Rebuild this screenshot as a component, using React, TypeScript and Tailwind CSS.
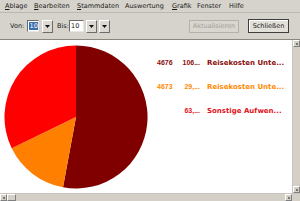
const menu = [
  { label: 'Ablage', u: true, w: 'w-[29px]' },
  { label: 'Bearbeiten', u: true, w: 'w-[43px]' },
  { label: 'Stammdaten', u: true, w: 'w-[48px]' },
  { label: 'Auswertung', u: false, w: 'w-[47px]' },
  { label: 'Grafik', u: true, w: 'w-[25px]' },
  { label: 'Fenster', u: false, w: 'w-[32px]' },
  { label: 'Hilfe', u: false, w: 'w-[30px]' },
];

const legend = [
  { nr: '4676', val: '106...', text: 'Reisekosten Unte...', color: 'text-[#8b0d0d]' },
  { nr: '4673', val: '29,...', text: 'Reisekosten Unte...', color: 'text-[#ff8a00]' },
  { nr: '', val: '63,...', text: 'Sonstige Aufwen...', color: 'text-[#e0101a]' },
];

function DropButton({ className = '' }: { className?: string }) {
  return (
    <div className={`w-[11px] h-[13px] flex items-center justify-center bg-[#dcd9d2] border border-t-white border-l-white border-r-[#6b6b6b] border-b-[#6b6b6b] ${className}`}>
      <svg width="5" height="3" viewBox="0 0 5 3">
        <path d="M0 0 H5 L2.5 3 Z" fill="#111" />
      </svg>
    </div>
  );
}

function ScrollBox() {
  return (
    <div className="w-[7px] h-[7px] shrink-0 bg-[#d4d0c8] border border-t-white border-l-white border-r-[#808080] border-b-[#808080] flex items-center justify-center">
      <div className="w-[2px] h-[2px] bg-[#777]" />
    </div>
  );
}

export default function App() {
  return (
    <div className="w-[300px] h-[201px] bg-[#d6d3cc] grid grid-rows-[13px_27px_153px_8px] font-['DejaVu_Sans',sans-serif] text-[#1a1a1a]">
      {/* menu */}
      <div className="flex items-center pl-[5px] text-[6.5px] leading-none border-b border-[#bdb9b1]">
        {menu.map((m) => (
          <div key={m.label} className={m.w}>
            {m.u ? (
              <>
                <span className="underline underline-offset-1">{m.label[0]}</span>
                {m.label.slice(1)}
              </>
            ) : (
              m.label
            )}
          </div>
        ))}
      </div>

      {/* toolbar */}
      <div className="flex items-center pl-[10px] pr-[11px] text-[6.5px] leading-none border-b border-[#8a8780]">
        <span className="w-[17px]">Von:</span>
        <div className="w-[12px] h-[12px] bg-white border border-t-[#6b6b6b] border-l-[#6b6b6b] border-r-[#e6e6e6] border-b-[#e6e6e6] flex items-center pl-[1px]">
          <span className="bg-[#3b6fb0] text-white leading-[8px] px-[0.5px]">10</span>
        </div>
        <DropButton className="ml-[3px]" />
        <span className="ml-[4px] w-[12px]">Bis:</span>
        <div className="w-[15px] h-[12px] bg-white border border-t-[#6b6b6b] border-l-[#6b6b6b] border-r-[#e6e6e6] border-b-[#e6e6e6] flex items-center pl-[1px]">
          10
        </div>
        <DropButton className="ml-[2px]" />
        <DropButton className="ml-[2px]" />
        <div className="flex-1" />
        <div className="w-[50px] h-[13px] flex items-center justify-center border border-[#b5b2ab] bg-[#d9d6d0] text-[#a09d97]">
          Aktualisieren
        </div>
        <div className="ml-[9px] w-[41px] h-[14px] flex items-center justify-center border border-[#3d3d3d] bg-[#e2dfd9] shadow-[inset_1px_1px_0_#fff]">
          Schließen
        </div>
      </div>

      {/* content */}
      <div className="flex overflow-hidden">
        <div className="flex-1 bg-white flex">
          <svg width="152" height="153" viewBox="0 0 152 153" className="shrink-0 block">
            <path d="M76 77 L76 5.5 A71.5 71.5 0 1 1 63 147.3 Z" fill="#800000" />
            <path d="M76 77 L63 147.3 A71.5 71.5 0 0 1 11.7 108.3 Z" fill="#ff8000" />
            <path d="M76 77 L11.7 108.3 A71.5 71.5 0 0 1 76 5.5 Z" fill="#ff0000" />
          </svg>
          <div className="flex flex-col gap-[16px] pt-[19px] text-[7px] font-bold leading-[8px]">
            {legend.map((l, i) => (
              <div key={i} className={`flex ${l.color}`}>
                <span className="w-[25px] ml-[5px] font-['Liberation_Sans',sans-serif]">{l.nr}</span>
                <span className="w-[18px] text-right whitespace-pre font-['Liberation_Sans',sans-serif]">{l.val}</span>
                <span className="ml-[7px] whitespace-nowrap">{l.text}</span>
              </div>
            ))}
          </div>
        </div>
        <div className="w-[8px] flex flex-col justify-between bg-[#d4d0c8] border-l border-[#c8c4bc]">
          <ScrollBox />
          <ScrollBox />
        </div>
      </div>
      <div className="flex bg-[#d4d0c8] border-t border-[#c8c4bc]">
        <ScrollBox />
        <div className="w-[9px] h-[7px] bg-[#d4d0c8] border border-t-white border-l-white border-r-[#808080] border-b-[#808080]" />
        <div className="flex-1" />
        <ScrollBox />
        <div className="w-[8px]" />
      </div>
    </div>
  );
}
